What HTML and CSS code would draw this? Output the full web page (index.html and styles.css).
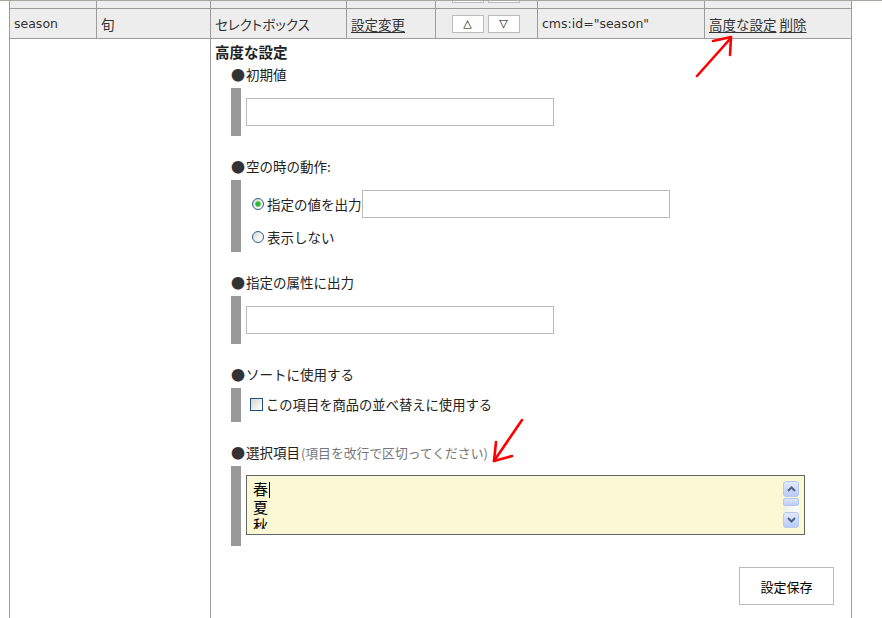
FILE: index.html
```html
<!DOCTYPE html>
<html lang="ja">
<head>
<meta charset="utf-8">
<title>高度な設定</title>
<link rel="stylesheet" href="styles.css">
</head>
<body>
<div class="topline"></div>
<table class="grid">
  <colgroup>
    <col class="c1"><col class="c2"><col class="c3"><col class="c4"><col class="c5"><col class="c6"><col class="c7">
  </colgroup>
  <tr class="prev">
    <td></td><td></td><td></td><td></td>
    <td class="ord"><span class="stub"></span><span class="stub"></span></td>
    <td></td><td></td>
  </tr>
  <tr class="row">
    <td class="latin">season</td>
    <td>旬</td>
    <td class="kana">セレクトボックス</td>
    <td><a href="#" class="lnk">設定変更</a></td>
    <td class="ord"><button class="mv">△</button><button class="mv">▽</button></td>
    <td class="latin">cms:id="season"</td>
    <td><a href="#" class="lnk">高度な設定</a> <a href="#" class="lnk">削除</a></td>
  </tr>
  <tr class="detail-row">
    <td colspan="2" class="blank"></td>
    <td colspan="5" class="detail">
      <div class="adv-title">高度な設定</div>

      <div class="opt">
        <div class="opt-label"><span class="dot">●</span>初期値</div>
        <div class="opt-body pad-std"><input class="field" type="text"></div>
      </div>

      <div class="opt">
        <div class="opt-label"><span class="dot">●</span>空の時の動作:</div>
        <div class="opt-body pad-empty">
          <label class="line line-tall"><input type="radio" name="empty" class="radio" checked><span class="rtext">指定の値を出力</span><input class="field" type="text"></label>
          <label class="line line-2"><input type="radio" name="empty" class="radio"><span class="rtext">表示しない</span></label>
        </div>
      </div>

      <div class="opt">
        <div class="opt-label"><span class="dot">●</span>指定の属性に出力</div>
        <div class="opt-body pad-std"><input class="field" type="text"></div>
      </div>

      <div class="opt">
        <div class="opt-label"><span class="dot">●</span>ソートに使用する</div>
        <div class="opt-body pad-check">
          <label class="line"><input type="checkbox" class="check"><span class="ctext">この項目を商品の並べ替えに使用する</span></label>
        </div>
      </div>

      <div class="opt">
        <div class="opt-label"><span class="dot">●</span>選択項目<span class="note">(項目を改行で区切ってください)</span></div>
        <div class="opt-body pad-area">
          <div class="area">
            <div class="area-text" role="textbox" aria-multiline="true">春<span class="caret"></span><br>夏<br>秋</div>
            <div class="sb">
              <div class="sb-btn"><svg width="9" height="6" viewBox="0 0 9 6"><path d="M1 5 L4.5 1.5 L8 5" fill="none" stroke="#4d6185" stroke-width="2"/></svg></div>
              <div class="sb-thumb"></div>
              <div class="sb-track"></div>
              <div class="sb-btn"><svg width="9" height="6" viewBox="0 0 9 6"><path d="M1 1 L4.5 4.5 L8 1" fill="none" stroke="#4d6185" stroke-width="2"/></svg></div>
            </div>
          </div>
        </div>
      </div>

      <div class="save-row"><button class="save">設定保存</button></div>
    </td>
  </tr>
</table>

<svg class="marks" width="882" height="618" viewBox="0 0 882 618" aria-hidden="true">
  <g fill="none" stroke="#ff0000" stroke-width="2.6" stroke-linecap="round" stroke-linejoin="round">
    <path d="M697 76 L730 39"/>
    <path d="M713 41 L731 37 L730 55"/>
    <path d="M522 420 L494 461"/>
    <path d="M496 442 L494 461 L512 456"/>
  </g>
</svg>
</body>
</html>
```
FILE: styles.css
```css
html, body {
  margin: 0;
  padding: 0;
  overflow: hidden;
  background: #ffffff;
}
body {
  width: 882px;
  height: 618px;
  position: relative;
  font-family: "Noto Sans CJK JP", "DejaVu Sans", sans-serif;
  font-size: 13.5px;
  color: #222;
}
.topline {
  height: 1px;
  background: #a9a69c;
}
.grid {
  border-collapse: collapse;
  table-layout: fixed;
  width: 843px;
  margin-left: 9px;
}
.grid td {
  border: 1px solid #9c9c9c;
  padding: 0 4px;
  overflow: hidden;
  white-space: nowrap;
}
.c1 { width: 87px; }
.c2 { width: 114px; }
.c3 { width: 136px; }
.c4 { width: 89px; }
.c5 { width: 102px; }
.c6 { width: 167px; }
.c7 { width: 147px; }

.prev td {
  border-top: 0;
  height: 7px;
  padding: 0;
  background: #ededed;
  vertical-align: top;
  line-height: 0;
}
.prev .ord {
  text-align: center;
  font-size: 0;
  padding: 0 2px 0 0;
}
.stub {
  display: inline-block;
  width: 30px;
  height: 1px;
  border: 1px solid #bbbbbb;
  border-top: 0;
  background: #fff;
  margin: 0 2px;
  vertical-align: top;
}

.row td {
  height: 29px;
  background: #ededed;
  vertical-align: middle;
  line-height: 16px;
  color: #333;
}
.latin {
  font-family: "DejaVu Sans", sans-serif;
  font-size: 12.5px;
}
.kana {
  font-feature-settings: "palt" 1;
}
.lnk {
  color: #333;
  text-decoration: underline;
  text-underline-offset: 2px;
}
.row .ord {
  text-align: center;
  font-size: 0;
  padding: 0 5px 0 3px;
}
.mv {
  display: inline-block;
  width: 32px;
  height: 18px;
  margin: 0 2px;
  padding: 0;
  border: 1px solid #bbbbbb;
  background: #fff;
  font-family: "DejaVu Sans", sans-serif;
  font-size: 11px;
  line-height: 14px;
  color: #000;
  vertical-align: middle;
}

.detail-row td {
  vertical-align: top;
  background: #fff;
  border-bottom: 0;
}
.detail {
  padding: 4px 17px 20px 4px !important;
}
.adv-title {
  font-weight: bold;
  font-size: 14.5px;
  line-height: 18px;
  height: 18px;
  margin-bottom: 3px;
  color: #222;
}
.opt {
  margin-left: 16px;
  margin-bottom: 20px;
}
.opt-label {
  height: 20px;
  line-height: 20px;
  color: #222;
}
.dot {
  font-size: 14px;
  color: #333;
  margin-right: 1px;
}
.note {
  color: #777;
  font-size: 12.8px;
  margin-left: 1px;
}
.opt-body {
  margin-top: 4px;
  border-left: 10px solid #999999;
  padding-left: 5px;
}
.pad-std { padding-top: 10px; padding-bottom: 10px; }
.pad-empty { padding-top: 10px; padding-bottom: 5px; }
.pad-check { padding-top: 6px; padding-bottom: 8px; }
.pad-area { padding-top: 9px; padding-bottom: 11px; }

.field {
  display: block;
  box-sizing: border-box;
  width: 308px;
  height: 28px;
  margin: 0;
  border: 1px solid #bbbbbb;
  background: #fff;
  padding: 2px 4px;
  font: inherit;
}
.line {
  display: flex;
  align-items: center;
  height: 20px;
}
.line-tall {
  height: 28px;
}
.line-2 {
  margin-top: 9px;
}
.radio {
  appearance: none;
  -webkit-appearance: none;
  box-sizing: border-box;
  width: 12px;
  height: 12px;
  margin: 0 3px 0 6px;
  border: 1px solid #2b5f8e;
  border-radius: 50%;
  background: linear-gradient(135deg, #d8d8d0 0%, #f4f4f0 60%, #ffffff 100%);
  flex: none;
}
.radio:checked {
  background: radial-gradient(circle at 50% 50%, #31b531 0, #31b531 2px, #8fd88f 2.8px, transparent 3.4px),
              linear-gradient(135deg, #d8d8d0 0%, #f4f4f0 60%, #ffffff 100%);
}
.rtext {
  color: #222;
  margin-right: 0;
}
.check {
  appearance: none;
  -webkit-appearance: none;
  box-sizing: border-box;
  width: 13px;
  height: 13px;
  margin: 0 3px 0 4px;
  border: 1px solid #1c5180;
  background: linear-gradient(135deg, #d6d6ce 0%, #f0f0ea 60%, #ffffff 100%);
  flex: none;
}
.ctext {
  color: #222;
  font-size: 13.3px;
}

.area {
  display: flex;
  box-sizing: border-box;
  width: 559px;
  height: 60px;
  border: 1px solid #666666;
  background: #fbf8d6;
  padding: 4px 5px 5px 6px;
}
.area-text {
  flex: 1;
  height: 49px;
  overflow: hidden;
  font-size: 15px;
  line-height: 18px;
  color: #000;
}
.caret {
  display: inline-block;
  width: 1px;
  height: 16px;
  background: #000;
  margin-left: 1px;
  vertical-align: -3px;
}
.sb {
  display: flex;
  flex-direction: column;
  width: 16px;
  height: 47px;
  margin-top: 1px;
}
.sb-btn {
  box-sizing: border-box;
  height: 16px;
  border: 1px solid #b6c8f0;
  border-radius: 3px;
  background: linear-gradient(#e2eafe, #b9cbf9);
  display: flex;
  align-items: center;
  justify-content: center;
}
.sb-thumb {
  box-sizing: border-box;
  height: 8px;
  margin-top: 1px;
  border: 1px solid #b6c8f0;
  border-radius: 2px;
  background: linear-gradient(#dde6fd, #bccdf8);
}
.sb-track {
  flex: 1;
  background: linear-gradient(90deg, #eeeee8, #fdfdfb);
}

.save-row {
  margin-top: 21px;
  text-align: right;
}
.save {
  box-sizing: border-box;
  width: 95px;
  height: 38px;
  border: 1px solid #bbbbbb;
  background: #fff;
  font-family: "Noto Sans CJK JP", sans-serif;
  font-size: 13px;
  color: #000;
  padding: 0;
}

.marks {
  position: absolute;
  left: 0;
  top: 0;
  pointer-events: none;
}
```
